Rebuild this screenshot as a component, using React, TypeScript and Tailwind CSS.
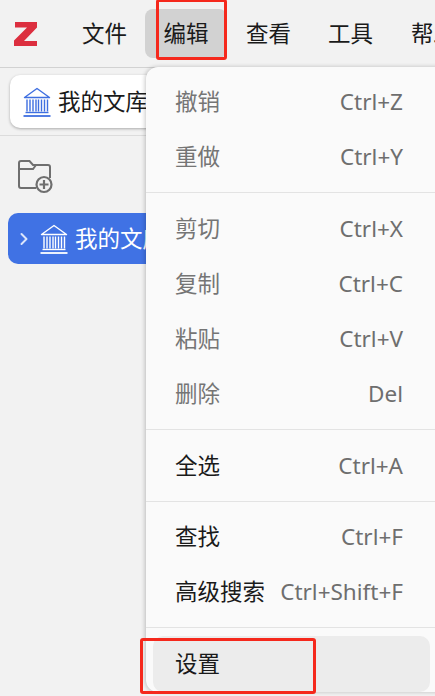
import { ChevronRight } from "lucide-react";

const FONT = "font-['Noto_Sans','Noto_Sans_CJK_SC',sans-serif]";

type Item = { label: string; keys?: string; disabled?: boolean; active?: boolean };

const MENU_GROUPS: Item[][] = [
  [
    { label: "撤销", keys: "Ctrl+Z", disabled: true },
    { label: "重做", keys: "Ctrl+Y", disabled: true },
  ],
  [
    { label: "剪切", keys: "Ctrl+X", disabled: true },
    { label: "复制", keys: "Ctrl+C", disabled: true },
    { label: "粘贴", keys: "Ctrl+V", disabled: true },
    { label: "删除", keys: "Del", disabled: true },
  ],
  [{ label: "全选", keys: "Ctrl+A" }],
  [
    { label: "查找", keys: "Ctrl+F" },
    { label: "高级搜索", keys: "Ctrl+Shift+F" },
  ],
  [{ label: "设置", active: true }],
];

function LibraryIcon({ className }: { className: string }) {
  return (
    <svg viewBox="0 0 28 30" fill="none" stroke="currentColor" strokeWidth="1.4" className={className}>
      <path d="M1.500 10.500 14 1.500l12.500 9z" strokeLinejoin="round" />
      <path d="M4 12.500v12M7 12.500v12M10 12.500v12M13 12.500v12M15.500 12.500v12M18.500 12.500v12M21.500 12.500v12M24.500 12.500v12" />
      <path d="M2.500 25.500h23" />
      <path d="M0.500 29h27" strokeWidth="1.800" />
    </svg>
  );
}

function NewFolderIcon() {
  return (
    <svg viewBox="0 0 36 36" fill="none" stroke="#6f6f6f" strokeWidth="2" className="h-9 w-9">
      <path d="M19 30H4a2 2 0 0 1-2-2V5a2 2 0 0 1 2-2h8.500l3.500 4h15a2 2 0 0 1 2 2v11" />
      <path d="M2 11h14l3-4" />
      <circle cx="27" cy="26.500" r="7.500" strokeWidth="2.200" />
      <path d="M27 22v9M22.500 26.500h9" strokeWidth="2.200" />
    </svg>
  );
}

function MenuRow({ item }: { item: Item }) {
  if (item.active) {
    return (
      <div className="mx-[7px] flex h-[56px] items-center rounded-[10px] bg-[#ececec] pl-[22px] text-[22.5px] text-[#1a1a1a]">
        {item.label}
      </div>
    );
  }
  return (
    <div
      className={`flex h-[55px] items-center justify-between pl-[29px] pr-[34px] text-[22.5px] ${
        item.disabled ? "text-[#757575]" : "text-[#1a1a1a]"
      }`}
    >
      <span>{item.label}</span>
      {item.keys && <span className="text-[22.5px] text-[#6e6e6e]">{item.keys}</span>}
    </div>
  );
}

export default function App() {
  return (
    <div className={`relative h-[696px] w-[435px] overflow-hidden bg-[#f2f2f2] text-[#1a1a1a] ${FONT}`}>
      {/* 메뉴바 */}
      <div className="flex h-[68px] items-start border-b border-[#d2d2d2] pl-[14px]">
        <svg viewBox="0 0 24 24" className="mt-[21px] h-[26px] w-[24px] shrink-0">
          <path d="M1 0h22v5.500L10 19h13v5H0v-5.500L13 5.500H1z" fill="#dc2f3f" />
        </svg>
        <div className="ml-[44px] mt-[9px] flex h-[49px] shrink-0 items-center text-[22.5px]">
          <span className="w-[63px]">文件</span>
          <span className="flex h-[49px] w-[82px] items-center justify-center rounded-[8px] bg-[#d2d2d2]">编辑</span>
          <span className="ml-[19px] w-[82px]">查看</span>
          <span className="w-[83px]">工具</span>
          <span className="whitespace-nowrap">帮助</span>
        </div>
      </div>

      {/* 탭 줄 */}
      <div className="flex h-[68px] items-start border-b border-[#dcdcdc] pl-[10px] pt-[7px]">
        <div className="flex h-[53px] w-[200px] items-center gap-[7px] rounded-[10px] bg-white pl-[13px] text-[22.5px] shadow-[0_1px_3px_rgba(0,0,0,0.3)]">
          <LibraryIcon className="h-[30px] w-[28px] shrink-0 text-[#3f6fe0]" />
          <span className="whitespace-nowrap">我的文库</span>
        </div>
      </div>

      {/* 사이드바 */}
      <div className="pl-[8px] pt-[22px]">
        <div className="pl-[9px]">
          <NewFolderIcon />
        </div>
        <div className="mt-[19px] flex h-[51px] w-[200px] items-center rounded-[10px] bg-[#4072e4] pl-[6px] text-[22.5px] text-white">
          <ChevronRight className="h-[20px] w-[20px] shrink-0 text-[#dbe5fb]" strokeWidth={2.4} />
          <LibraryIcon className="ml-[6px] h-[30px] w-[28px] shrink-0" />
          <span className="ml-[7px] whitespace-nowrap">我的文库</span>
        </div>
      </div>

      {/* 편집 메뉴 */}
      <div className="absolute left-[146px] top-[67px] w-[300px] rounded-l-[12px] bg-[#fafafa] pt-[7px] shadow-[-1px_0_4px_rgba(0,0,0,0.22)]">
        <div className="w-[291px]">
          {MENU_GROUPS.map((group, i) => (
            <div key={i}>
              {i > 0 && (
                <div className={`h-px w-[300px] bg-[#e3e3e3] ${i === 3 ? "my-[7.5px]" : "my-[8px]"}`} />
              )}
              {group.map((item) => (
                <MenuRow key={item.label} item={item} />
              ))}
            </div>
          ))}
        </div>
      </div>

      {/* 빨간 표시 */}
      <div className="absolute left-[156px] top-[-1px] h-[61px] w-[71px] rounded-[3px] border-[3px] border-[#f5281c]" />
      <div className="absolute left-[140px] top-[638px] h-[56px] w-[176px] rounded-[3px] border-[3px] border-[#f5281c]" />
    </div>
  );
}
